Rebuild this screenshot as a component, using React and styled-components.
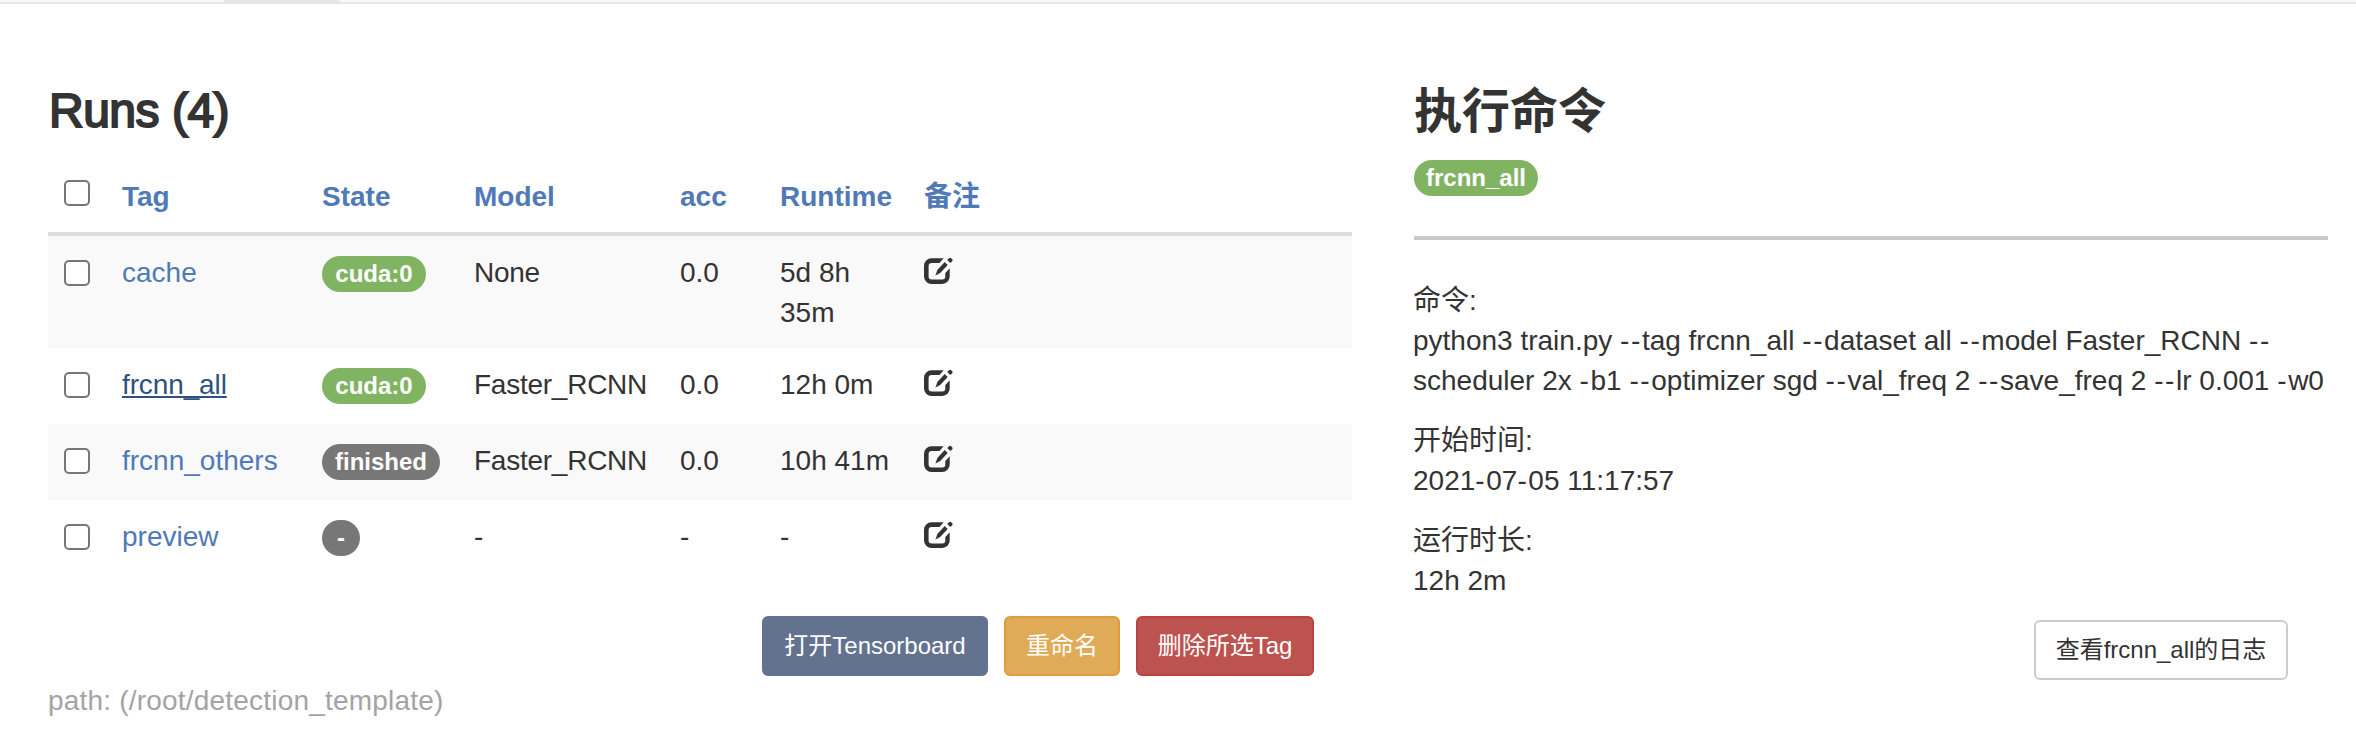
import React from 'react';
import styled, { createGlobalStyle, css } from 'styled-components';

const Global = createGlobalStyle`
  *, *::before, *::after { box-sizing: border-box; }
  body {
    margin: 0;
    background: #fff;
    color: #333;
    font-family: "Liberation Sans", "Noto Sans CJK SC", sans-serif;
    font-size: 28px;
    line-height: 40px;
  }
`;

const Navbar = styled.div`
  display: flex;
  height: 4px;
  padding-left: 224px;
  background: #f8f8f8;
  border-bottom: 2px solid #e7e7e7;
`;

const ActiveTab = styled.div`
  width: 116px;
  height: 2px;
  background: #e7e7e7;
`;

const Page = styled.main`
  display: flex;
  height: 742px;
  overflow: hidden;
`;

const RunsPanel = styled.section`
  width: 1304px;
  margin-left: 48px;
  padding-top: 80px;
`;

const DetailPanel = styled.section`
  width: 914px;
  margin-left: 62px;
  padding-top: 80px;
`;

const Heading = styled.h3`
  margin: 0;
  height: 54px;
  padding-left: 1px;
  font-size: 48px;
  line-height: 54px;
  font-weight: 400;
  -webkit-text-stroke: 2px #333;
  letter-spacing: -0.5px;
`;

const CjkHeading = styled(Heading)`
  padding: 1px 0 0;
  font-weight: 700;
  letter-spacing: 0;
  -webkit-text-stroke: 0;
`;

const columns = css`
  display: grid;
  grid-template-columns: 58px 200px 152px 206px 100px 144px 1fr;
`;

const HeadRow = styled.div`
  ${columns}
  height: 98px;
  padding-top: 39px;
  border-bottom: 4px solid #ddd;
  color: #4f79b7;
  font-weight: 700;
`;

const Row = styled.div`
  ${columns}
  height: ${(p) => (p.$tall ? 112 : 76)}px;
  padding-top: 17px;
  background: ${(p) => (p.$striped ? '#f9f9f9' : '#fff')};
`;

const Cell = styled.div`
  padding-left: 16px;
  letter-spacing: ${(p) => p.$spacing || 0};
`;

const Check = styled.input`
  appearance: none;
  display: block;
  width: 26px;
  height: 26px;
  margin: ${(p) => (p.$head ? 3 : 7)}px 0 0;
  border: 2px solid #767676;
  border-radius: 5px;
  background: #fff;
`;

const TagLink = styled.a`
  color: ${(p) => (p.$active ? '#2f5180' : '#4f79b7')};
  text-decoration: ${(p) => (p.$active ? 'underline' : 'none')};
  text-decoration-thickness: 2px;
  text-underline-offset: 2px;
  text-decoration-skip-ink: none;
  letter-spacing: ${(p) => (p.$active ? '-0.12px' : 0)};
`;

const Badge = styled.span`
  display: block;
  width: ${(p) => p.$width}px;
  height: 36px;
  margin-top: ${(p) => p.$top ?? 3}px;
  border-radius: 20px;
  background: ${(p) => (p.$success ? '#80b463' : '#777')};
  color: #fff;
  font-size: 24px;
  font-weight: 700;
  line-height: 35px;
  text-align: center;
  white-space: nowrap;
`;

const EditGlyph = styled.svg`
  display: block;
  width: 30px;
  height: 28px;
  margin-top: 4px;
`;

const Actions = styled.div`
  display: flex;
  justify-content: flex-end;
  gap: 16px;
  margin-top: 40px;
  padding-right: 38px;
`;

const Button = styled.button`
  width: ${(p) => p.$width}px;
  height: 60px;
  padding: 0;
  border: 2px solid ${(p) => p.$border};
  border-radius: 6px;
  background: ${(p) => p.$bg};
  color: ${(p) => p.$fg || '#fff'};
  font: 24px/36px "Liberation Sans", "Noto Sans CJK SC", sans-serif;
  white-space: nowrap;
`;

const PathText = styled.p`
  margin: 5px 0 0;
  color: #a3a3a3;
  letter-spacing: 0.2px;
`;

const Divider = styled.hr`
  height: 4px;
  margin: 40px 0 41px;
  border: 0;
  background: #c9c9c9;
`;

const Field = styled.p`
  margin: 0 -20px 20px -1px;
  white-space: nowrap;
`;

const Line = styled.span`
  display: block;
`;

const Hyphen = styled.span`
  letter-spacing: 1.6px;
`;

const LogAction = styled.div`
  display: flex;
  justify-content: flex-end;
  margin-top: -1px;
  padding-right: 40px;
`;

const TextLine = ({ children }) => (
  <Line>
    {children.split(/(-+)/).map((part, i) => (part.startsWith('-') ? <Hyphen key={i}>{part}</Hyphen> : part))}
  </Line>
);

const EditIcon = () => (
  <EditGlyph viewBox="0 0 30 28" fill="#333">
    <path d="M19.6 1.3H7.4A7.4 7.4 0 0 0 0 8.7v10.9A7.4 7.4 0 0 0 7.4 27h10.9a7.4 7.4 0 0 0 7.4-7.4v-8.3l-4.4 4.7v3.6a3 3 0 0 1-3 3H7.6a3 3 0 0 1-3-3V8.9a3 3 0 0 1 3-3h7.9Z" />
    <path d="M20.7 5.1l3 2.8-7.5 8.1-4.8 2.4 2-5.3Z" />
    <path d="M23.2 3.1l1.8-1.9q1-1 1.9-.1l1.3 1.2q1 1 0 2l-1.9 1.8Z" />
  </EditGlyph>
);

const runs = [
  { tag: 'cache', state: 'cuda:0', width: 104, success: true, model: 'None', acc: '0.0', time: ['5d 8h', '35m'] },
  { tag: 'frcnn_all', state: 'cuda:0', width: 104, success: true, model: 'Faster_RCNN', acc: '0.0', time: ['12h 0m'], active: true },
  { tag: 'frcnn_others', state: 'finished', width: 118, model: 'Faster_RCNN', acc: '0.0', time: ['10h 41m'] },
  { tag: 'preview', state: '-', width: 38, model: '-', acc: '-', time: ['-'] },
];

export default function App() {
  return (
    <>
      <Global />
      <Navbar><ActiveTab /></Navbar>
      <Page>
        <RunsPanel>
          <Heading>Runs (4)</Heading>
          <HeadRow>
            <Cell><Check type="checkbox" $head /></Cell>
            <Cell>Tag</Cell>
            <Cell>State</Cell>
            <Cell>Model</Cell>
            <Cell>acc</Cell>
            <Cell>Runtime</Cell>
            <Cell>备注</Cell>
          </HeadRow>
          {runs.map((run, i) => (
            <Row key={run.tag} $tall={run.time.length > 1} $striped={i % 2 === 0}>
              <Cell><Check type="checkbox" /></Cell>
              <Cell><TagLink $active={run.active}>{run.tag}</TagLink></Cell>
              <Cell><Badge $width={run.width} $success={run.success}>{run.state}</Badge></Cell>
              <Cell $spacing="-0.25px">{run.model}</Cell>
              <Cell>{run.acc}</Cell>
              <Cell>{run.time.map((part) => <Line key={part}>{part}</Line>)}</Cell>
              <Cell><EditIcon /></Cell>
            </Row>
          ))}
          <Actions>
            <Button $width={226} $bg="#63728f" $border="#63728f">打开Tensorboard</Button>
            <Button $width={116} $bg="#dfab56" $border="#dd9d3e">重命名</Button>
            <Button $width={178} $bg="#bd534f" $border="#b84340">删除所选Tag</Button>
          </Actions>
          <PathText>path: (/root/detection_template)</PathText>
        </RunsPanel>
        <DetailPanel>
          <CjkHeading>执行命令</CjkHeading>
          <Badge $width={124} $success $top={22}>frcnn_all</Badge>
          <Divider />
          <Field>
            <TextLine>命令:</TextLine>
            <TextLine>python3 train.py --tag frcnn_all --dataset all --model Faster_RCNN --</TextLine>
            <TextLine>scheduler 2x -b1 --optimizer sgd --val_freq 2 --save_freq 2 --lr 0.001 -w0</TextLine>
          </Field>
          <Field>
            <TextLine>开始时间:</TextLine>
            <TextLine>2021-07-05 11:17:57</TextLine>
          </Field>
          <Field>
            <TextLine>运行时长:</TextLine>
            <TextLine>12h 2m</TextLine>
          </Field>
          <LogAction>
            <Button $width={254} $bg="#fff" $border="#ccc" $fg="#333">查看frcnn_all的日志</Button>
          </LogAction>
        </DetailPanel>
      </Page>
    </>
  );
}
